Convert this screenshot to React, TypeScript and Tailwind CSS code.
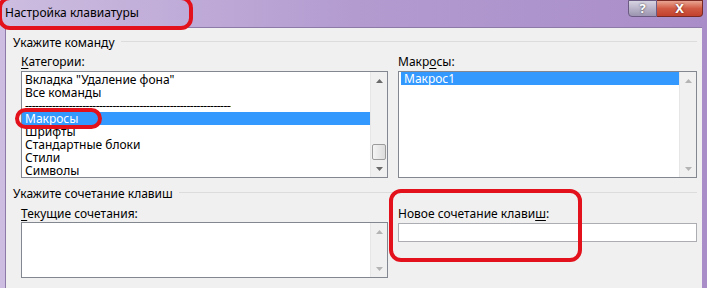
import type { ReactNode } from "react";

const font = { fontFamily: '"Noto Sans", "Open Sans", sans-serif' };

function Arrow({ up, dim = false }: { up: boolean; dim?: boolean }) {
  return (
    <svg width="7" height="4" viewBox="0 0 7 4" className="block">
      <path
        d={up ? "M0 4 L3.5 0 L7 4 Z" : "M0 0 L3.5 4 L7 0 Z"}
        fill={dim ? "#b4b4b4" : "#6a6a6a"}
      />
    </svg>
  );
}

function ScrollBar({ thumb = false, dim = false }: { thumb?: boolean; dim?: boolean }) {
  return (
    <div className="flex w-[17px] shrink-0 flex-col bg-[#f0f0f0] border-l border-[#e6e6e6]">
      <div className="flex h-[17px] items-center justify-center">
        <Arrow up dim={dim} />
      </div>
      <div className="flex flex-1 flex-col justify-end px-[1px]">
        {thumb && (
          <div className="h-[16px] rounded-[2px] border border-[#9b9b9b] bg-gradient-to-r from-[#f4f4f4] to-[#dcdcdc]" />
        )}
      </div>
      <div className="flex h-[17px] items-center justify-center">
        <Arrow up={false} dim={dim} />
      </div>
    </div>
  );
}

function GroupHeader({ children }: { children: ReactNode }) {
  return (
    <div className="flex items-center pl-[7px] pr-[5px]">
      <span className="leading-[15px]">{children}</span>
      <div className="ml-[6px] mt-[-2px] h-[2px] flex-1 border-t border-[#dcdcdc] border-b-white" />
    </div>
  );
}

function Item({ children, selected = false }: { children: ReactNode; selected?: boolean }) {
  return (
    <div
      className={`h-[13px] pl-[3px] leading-[13px] whitespace-nowrap ${
        selected ? "bg-[#3399ff] text-white" : ""
      }`}
    >
      {children}
    </div>
  );
}

export default function App() {
  return (
    <div
      style={font}
      className="relative flex h-[288px] w-[707px] flex-col overflow-hidden bg-gradient-to-r from-[#cdbde0] via-[#b39bd0] to-[#a98dc8] text-[12px] text-black"
    >
      {/* title bar */}
      <div className="flex h-[27px] shrink-0 items-start justify-between pl-[5px] pr-[4px]">
        <span className="mt-[5px] text-[12px] leading-[16px]">Настройка клавиатуры</span>
        <div className="flex h-[17px]">
          <div className="flex w-[29px] items-center justify-center rounded-bl-[4px] border border-[#6b5b82] bg-gradient-to-b from-[#d7d4e2] to-[#9c94b0] text-[13px] font-bold leading-none text-white [text-shadow:0_0_2px_#333]">
            ?
          </div>
          <div className="flex w-[46px] items-center justify-center rounded-br-[4px] border border-l-0 border-[#7a2a22] bg-gradient-to-b from-[#e8a592] via-[#d05a44] to-[#c2412e] text-[13px] font-bold leading-none text-white [text-shadow:0_0_2px_#5a1a10]">
            X
          </div>
        </div>
      </div>

      {/* client area */}
      <div className="ml-[5px] mr-[5px] flex flex-1 flex-col border-l border-t border-[#8d7aa8] bg-[#f0f0f0] pt-[7px]">
        <GroupHeader>Укажите команду</GroupHeader>

        <div className="mt-[4px] flex gap-[10px] pl-[15px] pr-[5px]">
          <div className="flex w-[367px] flex-col">
            <span className="leading-[15px]">
              <u className="underline-offset-2">К</u>атегории:
            </span>
            <div className="mt-[2px] flex h-[107px] border border-[#828790] bg-white">
              <div className="flex-1 overflow-hidden pt-[1px]">
                <Item>Вкладка "Удаление фона"</Item>
                <Item>Все команды</Item>
                <Item>
                  <span className="block w-[206px] overflow-hidden tracking-[-0.5px]">
                    ----------------------------------------------------------------------
                  </span>
                </Item>
                <Item selected>Макросы</Item>
                <Item>Шрифты</Item>
                <Item>Стандартные блоки</Item>
                <Item>Стили</Item>
                <Item>Символы</Item>
              </div>
              <ScrollBar thumb />
            </div>
          </div>

          <div className="flex flex-1 flex-col">
            <span className="leading-[15px]">
              Макр<u className="underline-offset-2">о</u>сы:
            </span>
            <div className="mt-[2px] flex h-[107px] border border-[#828790] bg-white">
              <div className="flex-1 overflow-hidden pl-[2px]">
                <Item selected>Макрос1</Item>
              </div>
              <ScrollBar dim />
            </div>
          </div>
        </div>

        <div className="mt-[8px]">
          <GroupHeader>Укажите сочетание клавиш</GroupHeader>
        </div>

        <div className="mt-[5px] flex gap-[10px] pl-[15px] pr-[5px]">
          <div className="flex w-[367px] flex-col">
            <span className="leading-[15px]">
              <u className="underline-offset-2">Т</u>екущие сочетания:
            </span>
            <div className="mt-[1px] flex h-[56px] border border-[#828790] bg-white">
              <div className="flex-1" />
              <ScrollBar dim />
            </div>
          </div>

          <div className="flex flex-1 flex-col">
            <span className="leading-[15px]">
              Новое сочетание клави<u className="underline-offset-2">ш</u>:
            </span>
            <div className="mt-[2px] h-[19px] border border-[#abadb3] bg-white" />
          </div>
        </div>
      </div>

      {/* red annotation marks */}
      <div className="pointer-events-none absolute left-[-2px] top-[-4px] h-[34px] w-[195px] rounded-[12px] border-[4px] border-[#e3111b]" />
      <div className="pointer-events-none absolute left-[15px] top-[108px] h-[21px] w-[87px] rounded-[11px] border-[4px] border-[#e3111b]" />
      <div className="pointer-events-none absolute left-[389px] top-[189px] h-[73px] w-[193px] rounded-[12px] border-[4px] border-[#e3111b]" />
    </div>
  );
}
